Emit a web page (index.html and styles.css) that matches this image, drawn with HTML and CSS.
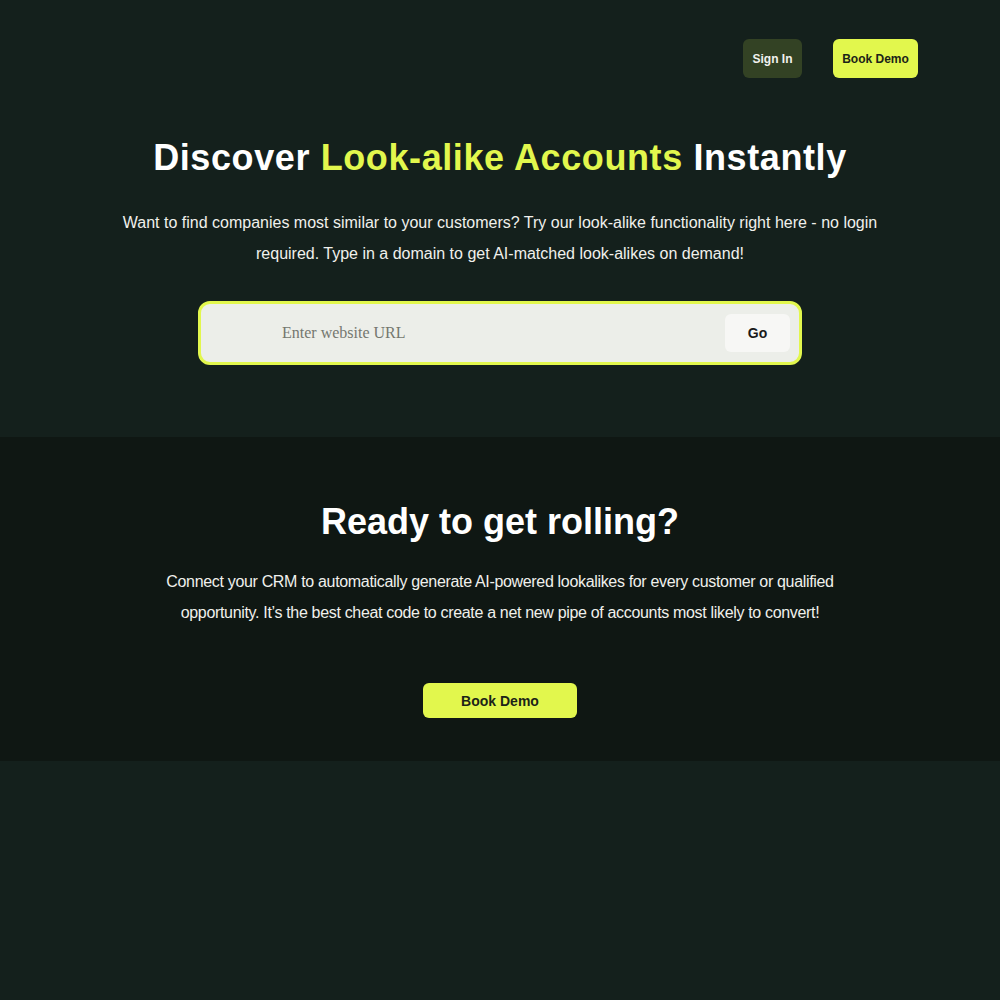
FILE: index.html
```html
<!DOCTYPE html>
<html lang="en">
<head>
<meta charset="utf-8">
<title>Look-alike Accounts</title>
<link rel="stylesheet" href="styles.css">
</head>
<body>
<header class="topbar">
  <a class="btn btn-signin" href="#">Sign In</a>
  <a class="btn btn-demo-sm" href="#">Book Demo</a>
</header>
<section class="hero">
  <h1 class="hero-title">Discover <span class="accent">Look-alike Accounts</span> Instantly</h1>
  <p class="hero-text">Want to find companies most similar to your customers? Try our look-alike functionality right here - no login required. Type in a domain to get AI-matched look-alikes on demand!</p>
  <form class="search">
    <input class="search-input" type="text" placeholder="Enter website URL">
    <button class="search-go" type="button">Go</button>
  </form>
</section>
<section class="cta">
  <h2 class="cta-title">Ready to get rolling?</h2>
  <p class="cta-text">Connect your CRM to automatically generate AI-powered lookalikes for every customer or qualified opportunity. It’s the best cheat code to create a net new pipe of accounts most likely to convert!</p>
  <a class="btn btn-demo-lg" href="#">Book Demo</a>
</section>
</body>
</html>
```
FILE: styles.css
```css
html, body {
  margin: 0;
  padding: 0;
  background: #14201c;
  font-family: "Liberation Sans", Arial, sans-serif;
  color: #ffffff;
}
.topbar {
  display: flex;
  justify-content: flex-end;
  align-items: center;
  gap: 31px;
  padding: 39px 82px 0 0;
  height: 39px;
}
.btn {
  display: inline-flex;
  align-items: center;
  justify-content: center;
  text-decoration: none;
  font-weight: bold;
  border-radius: 6px;
}
.btn-signin {
  width: 59px;
  height: 39px;
  background: #334224;
  color: #f2f2ee;
  font-size: 12px;
}
.btn-demo-sm {
  width: 85px;
  height: 39px;
  background: #e2f74d;
  color: #1c2418;
  font-size: 12px;
}
.hero {
  display: flex;
  flex-direction: column;
  align-items: center;
  padding-top: 58px;
  height: 301px;
}
.hero-title {
  margin: 0;
  font-size: 36px;
  line-height: 44px;
  letter-spacing: 0.6px;
  font-weight: bold;
}
.accent { color: #e2f74d; }
.hero-text {
  margin: 27px 0 0;
  width: 800px;
  text-align: center;
  font-size: 16px;
  line-height: 31px;
  color: #f0f0ec;
}
.search {
  margin-top: 32px;
  width: 598px;
  height: 58px;
  border: 3px solid #e2f74d;
  border-radius: 12px;
  background: #eceee9;
  display: flex;
  align-items: center;
  padding: 0;
  box-sizing: content-box;
}
.search-input {
  flex: 1;
  border: none;
  background: transparent;
  outline: none;
  font-family: "Liberation Serif", "Times New Roman", serif;
  font-size: 16px;
  color: #333;
  padding: 0 0 0 81px;
  height: 38px;
}
.search-input::placeholder { color: #74776f; }
.search-go {
  width: 65px;
  height: 38px;
  margin-right: 9px;
  border: none;
  border-radius: 6px;
  background: #f7f7f5;
  font-family: "Liberation Sans", Arial, sans-serif;
  font-weight: bold;
  font-size: 14px;
  color: #1a1a1a;
}
.cta {
  background: #0f1713;
  display: flex;
  flex-direction: column;
  align-items: center;
  padding-top: 63px;
  height: 261px;
}
.cta-title {
  margin: 0;
  font-size: 36px;
  line-height: 44px;
  font-weight: bold;
}
.cta-text {
  margin: 22px 0 0;
  width: 700px;
  text-align: center;
  font-size: 16px;
  line-height: 31px;
  letter-spacing: -0.33px;
  color: #f0f0ec;
}
.btn-demo-lg {
  margin-top: 55px;
  width: 154px;
  height: 35px;
  background: #e2f74d;
  color: #1c2418;
  font-size: 14px;
}
```
